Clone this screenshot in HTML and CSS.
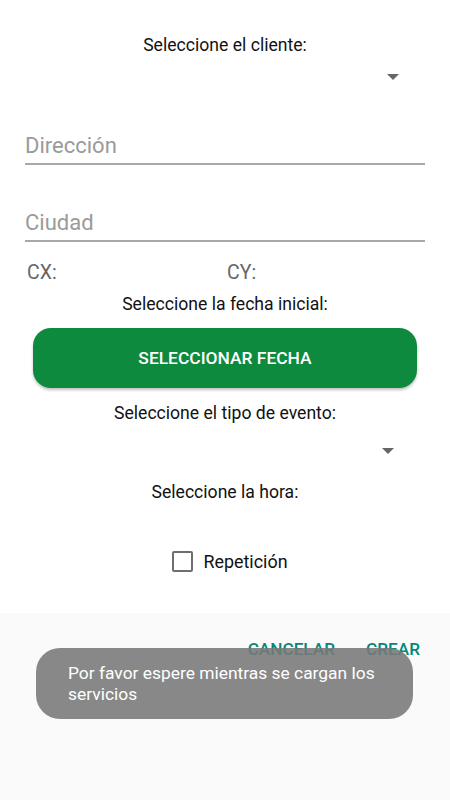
FILE: index.html
```
<!DOCTYPE html>
<html lang="es">
<head>
    <meta charset="UTF-8">
    <meta name="viewport" content="width=device-width, initial-scale=1.0">
    <title>Nuevo evento</title>
    <link rel="stylesheet" href="styles.css">
</head>
<body>
    <div class="form">
        <div class="label label-client">Seleccione el cliente:</div>
        <div class="spinner spinner-client"><span class="arrow"></span></div>

        <div class="field field-first"><span class="hint">Dirección</span></div>
        <div class="field"><span class="hint">Ciudad</span></div>

        <div class="coords">
            <span class="coord">CX:</span>
            <span class="coord">CY:</span>
        </div>

        <div class="label label-date">Seleccione la fecha inicial:</div>
        <button class="date-btn">SELECCIONAR FECHA</button>

        <div class="label label-type">Seleccione el tipo de evento:</div>
        <div class="spinner spinner-type"><span class="arrow"></span></div>

        <div class="label label-hour">Seleccione la hora:</div>

        <label class="repeat">
            <span class="box"></span>
            <span>Repetición</span>
        </label>
    </div>

    <div class="actions">
        <a href="#" class="action">CANCELAR</a>
        <a href="#" class="action">CREAR</a>
    </div>

    <div class="toast">Por favor espere mientras se cargan los servicios</div>
</body>
</html>
```

FILE: styles.css
```
body {
    font-family: Roboto, "Noto Sans", sans-serif;
    margin: 0;
    padding: 0;
    height: 800px;
    display: flex;
    flex-direction: column;
    background-color: #fafafa;
    color: #111;
    overflow: hidden;
}
.form {
    background-color: #fff;
    height: 613px;
    flex-shrink: 0;
    display: flex;
    flex-direction: column;
    padding: 0 25px;
    box-sizing: border-box;
}
.label {
    font-size: 17.6px;
    text-align: center;
    line-height: 22px;
}
.label-client {
    margin-top: 34px;
}
.spinner {
    height: 24px;
    position: relative;
}
.spinner-client {
    margin-top: 12px;
}
.arrow {
    position: absolute;
    top: 6px;
    width: 0;
    height: 0;
    border-left: 6px solid transparent;
    border-right: 6px solid transparent;
    border-top: 6px solid #666;
}
.spinner-client .arrow {
    right: 26px;
}
.spinner-type .arrow {
    right: 31px;
}
.field {
    border-bottom: 2px solid #a8a8a8;
    height: 44px;
    display: flex;
    align-items: flex-end;
    padding-bottom: 4px;
    box-sizing: border-box;
}
.field-first {
    margin-top: 29px;
}
.field + .field {
    margin-top: 33px;
}
.hint {
    font-size: 22px;
    color: #9a9a9a;
    line-height: 26px;
}
.coords {
    display: flex;
    margin-top: 20px;
    font-size: 19.5px;
    color: #666;
    line-height: 22px;
}
.coord {
    width: 200px;
    padding-left: 2px;
}
.label-date {
    margin-top: 9px;
}
.date-btn {
    margin: 13px 8px 0;
    height: 60px;
    flex-shrink: 0;
    border: none;
    border-radius: 18px;
    background-color: #0e8a3f;
    color: #fff;
    font-family: Roboto, sans-serif;
    font-weight: 500;
    font-size: 17.4px;
    box-shadow: 0 2px 3px rgba(0, 0, 0, 0.25);
}
.label-type {
    margin-top: 14px;
}
.spinner-type {
    margin-top: 18px;
}
.label-hour {
    margin-top: 15px;
}
.repeat {
    display: flex;
    align-items: center;
    justify-content: center;
    gap: 10px;
    height: 22px;
    margin-top: 47px;
    margin-left: 10px;
    font-size: 17.9px;
}
.box {
    width: 17px;
    height: 17px;
    border: 2px solid #6e6e6e;
    border-radius: 2px;
}
.actions {
    display: flex;
    justify-content: flex-end;
    gap: 31px;
    padding: 27px 30px 0 0;
}
.action {
    text-decoration: none;
    color: #00897b;
    font-weight: 500;
    font-size: 17.2px;
    line-height: 18px;
}
.toast {
    position: absolute;
    left: 36px;
    top: 648px;
    width: 377px;
    box-sizing: border-box;
    padding: 15px 32px 14px;
    border-radius: 24px;
    background-color: rgba(120, 120, 120, 0.88);
    color: #fff;
    font-size: 17.4px;
    line-height: 21px;
}
```
